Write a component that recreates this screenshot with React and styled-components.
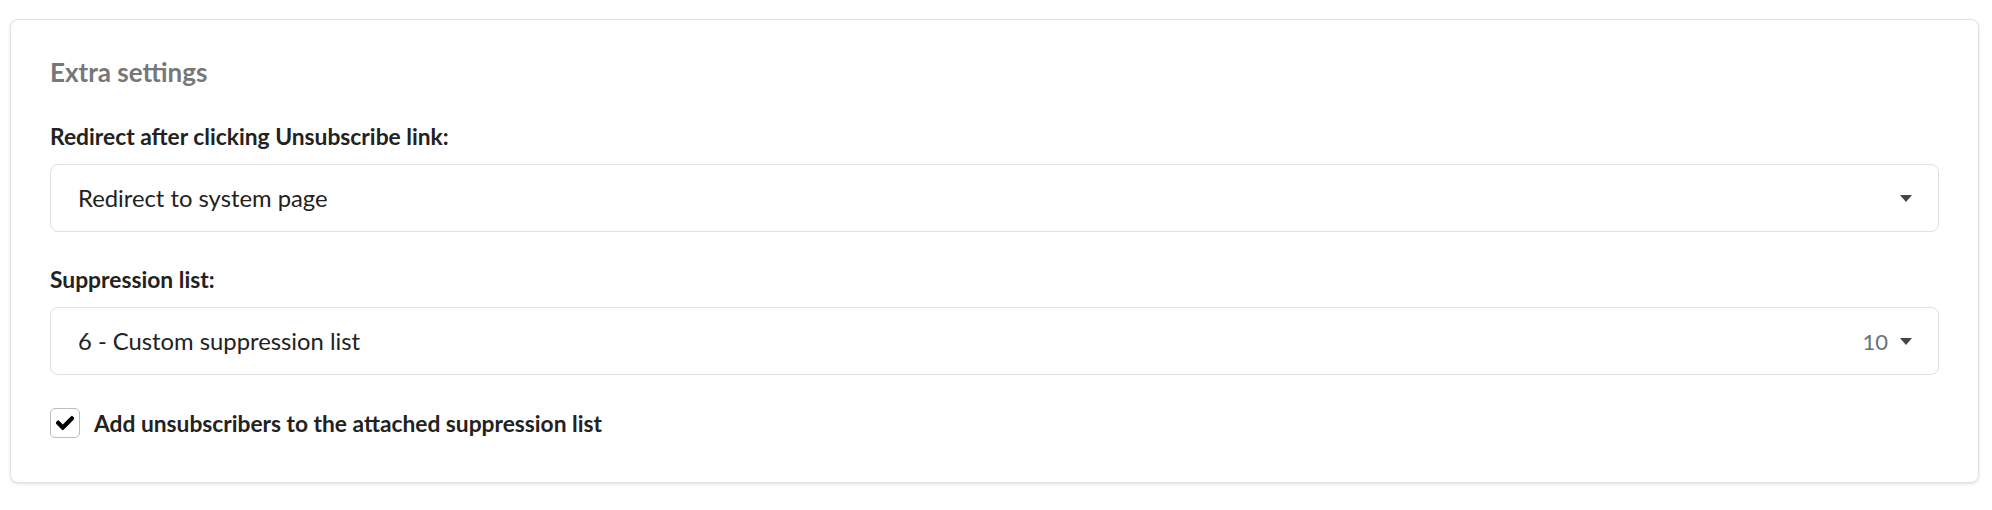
import React from "react";
import styled, { createGlobalStyle } from "styled-components";
import { FaCheck } from "react-icons/fa";

const FONT = `Lato, "Open Sans", sans-serif`;

const Global = createGlobalStyle`
  html, body { margin: 0; padding: 0; background: #ffffff; }
  body { font-family: ${FONT}; color: #222222; }
`;

const Page = styled.div`
  padding: 19px 13px 26px 10px;
`;

const Card = styled.section`
  background: #ffffff;
  border: 1px solid #e2e2e2;
  border-radius: 8px;
  box-shadow: 0 1px 3px rgba(0, 0, 0, 0.12);
  padding: 36px 39px 44px 39px;
  display: flex;
  flex-direction: column;
`;

const Title = styled.h2`
  margin: 0 0 34px 0;
  font-size: 26px;
  line-height: 32px;
  font-weight: 700;
  color: #777777;
`;

const Field = styled.div`
  margin-bottom: ${(p) => p.$gap}px;
`;

const Label = styled.label`
  display: block;
  font-size: 22.8px;
  line-height: 28px;
  font-weight: 700;
  color: #222222;
  margin-bottom: 14px;
`;

const Select = styled.div`
  height: 68px;
  box-sizing: border-box;
  border: 1px solid #e0e0e0;
  border-radius: 8px;
  display: flex;
  align-items: center;
  padding: 0 26px 0 27px;
  font-size: 23.8px;
  color: #222222;
`;

const Value = styled.span`
  flex: 1;
`;

const Count = styled.span`
  color: #66727f;
  margin-right: 12px;
  font-size: 22px;
`;

const Caret = styled.span`
  width: 0;
  height: 0;
  border-left: 6.5px solid transparent;
  border-right: 6.5px solid transparent;
  border-top: 7px solid #444444;
`;

const CheckRow = styled.label`
  display: flex;
  align-items: center;
  gap: 14px;
  font-size: 22.75px;
  font-weight: 700;
  color: #222222;
  height: 30px;
`;

const Box = styled.span`
  width: 30px;
  height: 30px;
  box-sizing: border-box;
  border: 1px solid #bdbdbd;
  border-radius: 5px;
  display: flex;
  align-items: center;
  justify-content: center;
  font-size: 18px;
  color: #000000;

  svg path {
    stroke: currentColor;
    stroke-width: 28px;
    stroke-linejoin: round;
  }
`;

export default function App() {
  return (
    <>
      <Global />
      <Page>
        <Card>
          <Title>Extra settings</Title>
          <Field $gap={33}>
            <Label>Redirect after clicking Unsubscribe link:</Label>
            <Select>
              <Value>Redirect to system page</Value>
              <Caret />
            </Select>
          </Field>
          <Field $gap={33}>
            <Label>Suppression list:</Label>
            <Select>
              <Value>6 - Custom suppression list</Value>
              <Count>10</Count>
              <Caret />
            </Select>
          </Field>
          <CheckRow>
            <Box>
              <FaCheck />
            </Box>
            Add unsubscribers to the attached suppression list
          </CheckRow>
        </Card>
      </Page>
    </>
  );
}
